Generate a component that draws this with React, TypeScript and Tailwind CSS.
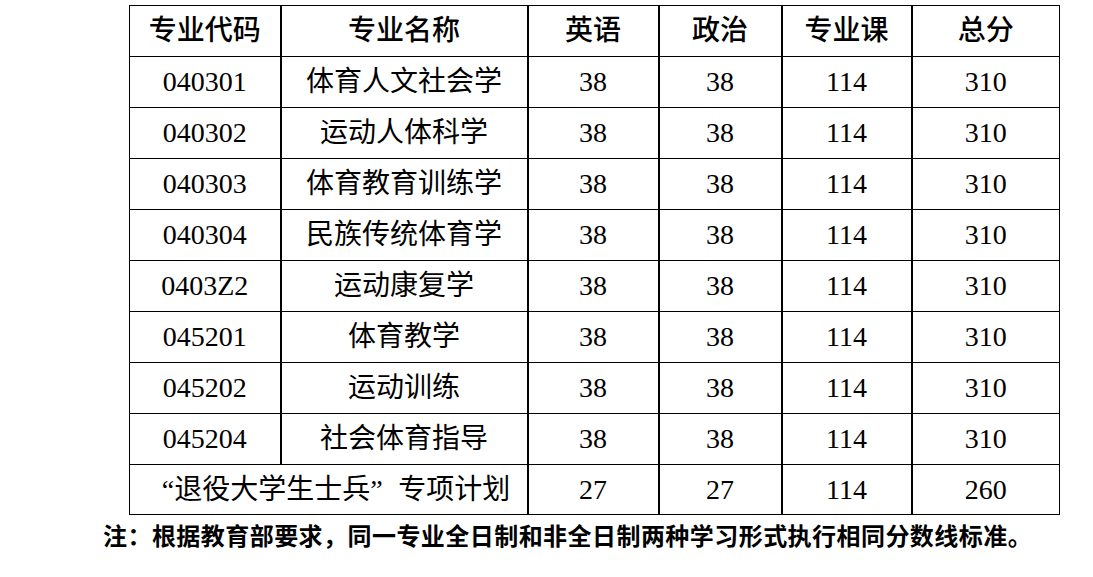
import React from "react";

const rows: [string, string, string, string, string, string][] = [
  ["040301", "体育人文社会学", "38", "38", "114", "310"],
  ["040302", "运动人体科学", "38", "38", "114", "310"],
  ["040303", "体育教育训练学", "38", "38", "114", "310"],
  ["040304", "民族传统体育学", "38", "38", "114", "310"],
  ["0403Z2", "运动康复学", "38", "38", "114", "310"],
  ["045201", "体育教学", "38", "38", "114", "310"],
  ["045202", "运动训练", "38", "38", "114", "310"],
  ["045204", "社会体育指导", "38", "38", "114", "310"],
];

const font = { fontFamily: '"Liberation Serif", "Noto Sans CJK SC", serif' };

export default function App() {
  const cell = "h-[51px] border-b border-black text-center align-middle p-0";
  const vr = " border-r-2 border-black";
  return (
    <div className="w-[1093px] h-[577px] bg-white text-black overflow-hidden" style={font}>
      <div className="pt-[5px] pl-[129px]">
        <table className="table-fixed border-collapse border border-black w-[930px] text-[28px] leading-none">
          <colgroup>
            <col className="w-[151px]" />
            <col className="w-[247px]" />
            <col className="w-[131px]" />
            <col className="w-[123px]" />
            <col className="w-[130px]" />
            <col className="w-[148px]" />
          </colgroup>
          <thead>
            <tr className="font-medium">
              <td className={cell + vr}>专业代码</td>
              <td className={cell + vr}>专业名称</td>
              <td className={cell + vr}>英语</td>
              <td className={cell + vr}>政治</td>
              <td className={cell + vr}>专业课</td>
              <td className={cell}>总分</td>
            </tr>
          </thead>
          <tbody className="font-normal">
            {rows.map((r) => (
              <tr key={r[0]}>
                <td className={cell + vr}>{r[0]}</td>
                <td className={cell + vr}>{r[1]}</td>
                <td className={cell + vr}>{r[2]}</td>
                <td className={cell + vr}>{r[3]}</td>
                <td className={cell + vr}>{r[4]}</td>
                <td className={cell}>{r[5]}</td>
              </tr>
            ))}
            <tr>
              <td colSpan={2} className={"h-[50px] text-center align-middle p-0" + vr}>
                <span className="inline-block w-[28px] text-right">“</span>退役大学生士兵<span className="inline-block w-[28px] text-left">”</span>专项计划
              </td>
              <td className={"h-[50px] text-center align-middle p-0" + vr}>27</td>
              <td className={"h-[50px] text-center align-middle p-0" + vr}>27</td>
              <td className={"h-[50px] text-center align-middle p-0" + vr}>114</td>
              <td className="h-[50px] text-center align-middle p-0">260</td>
            </tr>
          </tbody>
        </table>
      </div>
      <div
        className="pl-[103px] mt-[2px] text-[24px] leading-[36px] font-bold tracking-[0.45px]"
        style={{ fontFamily: '"Noto Sans CJK SC", sans-serif' }}
      >
        注：根据教育部要求，同一专业全日制和非全日制两种学习形式执行相同分数线标准。
      </div>
    </div>
  );
}
